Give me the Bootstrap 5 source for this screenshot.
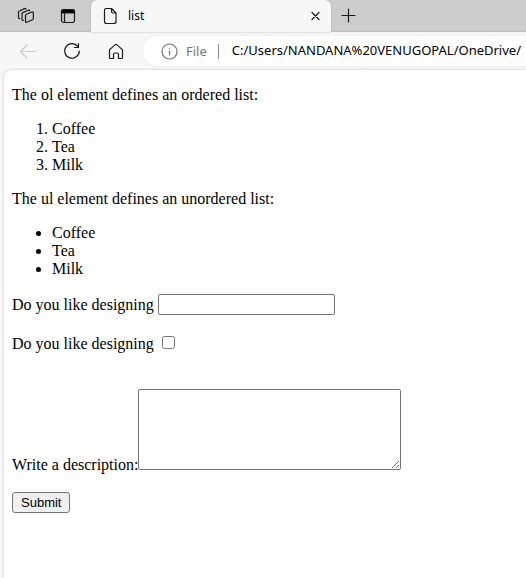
<!DOCTYPE html>
<html lang="en">
<head>
<meta charset="utf-8">
<meta name="viewport" content="width=device-width, initial-scale=1">
<title>list</title>
<link href="https://cdn.jsdelivr.net/npm/bootstrap@5.3.0/dist/css/bootstrap.min.css" rel="stylesheet">
<style>
  body { background: #f7f7f7; color: #000; font-family: "Noto Sans", "Open Sans", sans-serif; }
  svg { display: block; flex: none; fill: none; stroke: #1b1b1b; stroke-width: 1.2; stroke-linecap: round; stroke-linejoin: round; }
  .icon-btn { display: block; padding: 0; border: 0; background: none; }
  .muted-icon { stroke: #757575; }
  .disabled-icon { stroke: #cacaca; }
  .tab-strip { height: 32px; background: #cdcdcd; box-shadow: inset 0 -1px 1px #bdbdbd; }
  .strip-tools { width: 91px; padding-left: 17px; gap: 25px; }
  .browser-tab { width: 240px; height: 32px; padding: 0 9px 0 12px; gap: 9px; background: #f7f7f7; border-radius: 6px 6px 0 0; box-shadow: 0 0 2px #aaa; font-size: 12px; }
  .new-tab { margin-left: 10px; }
  .tool-bar { height: 38px; padding-left: 19px; gap: 27px; background: #f7f7f7; }
  .address { height: 30px; min-width: 0; padding-left: 18px; margin-left: -8px; background: #fff; border-radius: 15px 0 0 15px; box-shadow: 0 0 2px #e4e4e4; }
  .scheme { margin-left: 8px; padding-right: 11px; color: #757575; font-size: 13px; line-height: 16px; }
  .divider { width: 1px; height: 15px; background: #8a8a8a; }
  .path-field { min-width: 0; margin-left: 13px; padding: 0; border: 0; outline: 0; background: none; color: #000; font-size: 13px; }
  .document { margin-left: 4px; padding: 16px 8px; background: #fff; border-radius: 8px 0 0 0; box-shadow: 0 0 3px #c4c4c4; font: 16px/18px "Liberation Serif", "Times New Roman", serif; }
  .document p, .document ol, .document ul { margin-bottom: 16px; }
  .document ol, .document ul { padding-left: 40px; }
  .entry { padding: 0; border: 1px solid #767676; border-radius: 2px; background: #fff; }
  .line-entry { width: 177px; height: 21px; }
  .tick { width: 13px; height: 13px; margin: 0 4px 3px; }
  .tick-row { margin: 20px 0 36px; }
  .area-entry { width: 263px; height: 81px; resize: both; vertical-align: baseline; }
  .send { margin-top: 18px; padding: 0 8px; height: 21px; border: 1px solid #767676; border-radius: 3px; background: #efefef; color: #000; font: 13px/19px "Liberation Sans", Arial, sans-serif; }
</style>
</head>
<body class="d-flex flex-column min-vh-100 overflow-hidden">
<header>
  <div class="tab-strip d-flex align-items-center">
    <div class="strip-tools d-flex align-items-center flex-shrink-0">
      <button class="icon-btn" type="button" aria-label="Workspaces">
        <svg width="18" height="18" viewBox="0 0 18 18"><path d="M8.500 8.300 Q8.500 7.500 9.300 7.200 L15 5 Q16.300 4.600 16.300 5.800 V11.500 Q16.300 12.300 15.500 12.700 L9.800 15.200 Q8.500 15.700 8.500 14.400 Z"/><path d="M6.300 13.300 Q5 13.500 5 12.300 V6.800 Q5 6 5.800 5.600 L11.300 3.200 Q12.500 2.800 12.800 3.800"/><path d="M2.800 11.500 Q1.500 11.700 1.500 10.500 V5.200 Q1.500 4.300 2.300 4 L7.500 1.600 Q8.800 1.100 9.100 2.200"/></svg>
      </button>
      <button class="icon-btn" type="button" aria-label="Tab actions">
        <svg width="16" height="16" viewBox="0 0 16 16"><rect x="1.500" y="1.500" width="13" height="13" rx="2.200"/><path d="M1.500 5V3.500Q1.500 1.500 3.500 1.500H12.500Q14.500 1.500 14.500 3.500V5Z" fill="#000"/><path d="M4.500 5V14.500"/></svg>
      </button>
    </div>
    <div class="browser-tab d-flex align-items-center flex-shrink-0">
      <svg width="16" height="18" viewBox="0 0 16 18"><path d="M3.500 1.500H8.500L13 6V14.500Q13 16.500 11 16.500H3.500Q1.500 16.500 1.500 14.500V3.500Q1.500 1.500 3.500 1.500ZM8.500 1.500V4.500Q8.500 6 10 6H13"/></svg>
      <span class="me-auto">list</span>
      <button class="icon-btn" type="button" aria-label="Close tab">
        <svg width="13" height="12" viewBox="0 0 13 12"><path d="M3 2.500L10 9.500M10 2.500L3 9.500"/></svg>
      </button>
    </div>
    <button class="icon-btn new-tab" type="button" aria-label="New tab">
      <svg width="16" height="16" viewBox="0 0 16 16"><path d="M7.500 1V14M1 7.500H14"/></svg>
    </button>
  </div>
  <div class="tool-bar d-flex align-items-center">
    <button class="icon-btn" type="button" aria-label="Back">
      <svg class="disabled-icon" width="17" height="17" viewBox="0 0 17 17"><path d="M16.500 8.500H1.500M8 2L1.500 8.500L8 15"/></svg>
    </button>
    <button class="icon-btn" type="button" aria-label="Refresh">
      <svg width="18" height="18" viewBox="0 0 18 18"><path d="M14.800 4.500A7.300 7.300 0 1 0 16.300 9M15.500 1.500V5.500H11.300"/></svg>
    </button>
    <button class="icon-btn" type="button" aria-label="Home">
      <svg width="16" height="17" viewBox="0 0 16 17"><path d="M1.500 7.300Q1.500 6.800 1.900 6.400L7 1.900Q8 1 9 1.900L14.100 6.400Q14.500 6.800 14.500 7.300V14.500Q14.500 15.500 13.500 15.500H10.500V11.500Q10.500 10 9 10H7Q5.500 10 5.500 11.500V15.500H2.500Q1.500 15.500 1.500 14.500Z"/></svg>
    </button>
    <div class="address d-flex align-items-center flex-grow-1">
      <svg class="muted-icon" width="17" height="17" viewBox="0 0 17 17"><circle cx="8.500" cy="8.500" r="7.500"/><path d="M8.500 7.800V12M8.500 5V5.300"/></svg>
      <span class="scheme">File</span>
      <span class="divider flex-shrink-0"></span>
      <input class="path-field flex-grow-1" type="text" aria-label="Address" value="C:/Users/NANDANA%20VENUGOPAL/OneDrive/">
    </div>
  </div>
</header>
<main class="document flex-grow-1">
  <p>The ol element defines an ordered list:</p>
  <ol>
    <li>Coffee</li>
    <li>Tea</li>
    <li>Milk</li>
  </ol>
  <p>The ul element defines an unordered list:</p>
  <ul>
    <li>Coffee</li>
    <li>Tea</li>
    <li>Milk</li>
  </ul>
  <form>
    <div class="d-flex align-items-center gap-1">
      <label for="designing">Do you like designing</label>
      <input class="entry line-entry" id="designing" type="text">
    </div>
    <div class="tick-row d-flex align-items-center gap-1">
      <label for="agree">Do you like designing</label>
      <input class="tick" id="agree" type="checkbox">
    </div>
    <div>
      <label for="description">Write a description:</label><textarea class="entry area-entry" id="description"></textarea>
    </div>
    <button class="send" type="button">Submit</button>
  </form>
</main>
<script src="https://cdn.jsdelivr.net/npm/bootstrap@5.3.0/dist/js/bootstrap.bundle.min.js"></script>
</body>
</html>
